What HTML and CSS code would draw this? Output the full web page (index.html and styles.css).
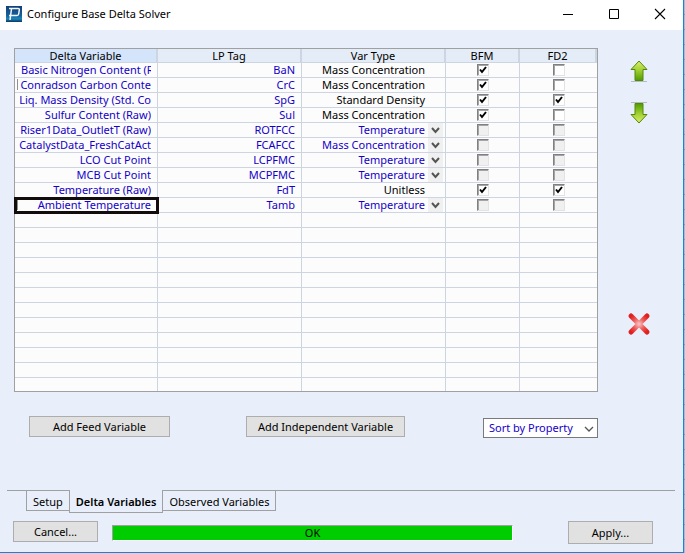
FILE: index.html
```html
<!DOCTYPE html>
<html lang="en">
<head>
<meta charset="utf-8">
<title>Configure Base Delta Solver</title>
<link rel="stylesheet" href="styles.css">
</head>
<body>
<div class="dialog">
  <header class="titlebar">
    <svg class="logo" width="16" height="16" viewBox="0 0 16 16" aria-hidden="true">
      <defs><linearGradient id="navy" x1="0" y1="0" x2="0" y2="1"><stop offset="0" stop-color="#123f78"/><stop offset=".6" stop-color="#16619b"/><stop offset=".8" stop-color="#1b86b8"/><stop offset="1" stop-color="#0c3566"/></linearGradient></defs>
      <rect width="16" height="16" fill="url(#navy)"/>
      <path d="M3 2.500h9q1.500 0 1.300 1.300L12.700 8q-.2 1.500-1.700 1.500H3M5.500 3L4 14" fill="none" stroke="#f2f6fa" stroke-width="1.500"/>
    </svg>
    <h1 class="title">Configure Base Delta Solver</h1>
    <button class="win" aria-label="Minimize"><svg width="12" height="12" viewBox="0 0 12 12"><path d="M1 6.500h10" stroke="#000"/></svg></button>
    <button class="win" aria-label="Maximize"><svg width="12" height="12" viewBox="0 0 12 12"><path d="M1.500 1.500h9v9h-9z" fill="none" stroke="#000"/></svg></button>
    <button class="win" aria-label="Close"><svg width="12" height="12" viewBox="0 0 12 12"><path d="M1 1l10 10M11 1L1 11" stroke="#000" stroke-width="1.100"/></svg></button>
  </header>
  <main class="content">
    <section class="workspace">
      <table class="grid">
        <colgroup><col class="c-name"><col class="c-tag"><col class="c-type"><col class="c-bfm"><col class="c-fd2"></colgroup>
        <thead><tr><th class="current">Delta Variable</th><th>LP Tag</th><th>Var Type</th><th>BFM</th><th>FD2</th></tr></thead>
        <tbody id="rows"></tbody>
      </table>
      <div class="tools">
        <button class="tool" aria-label="Move up"><svg width="20" height="24" viewBox="0 0 20 24"><use href="#arrow"/></svg></button>
        <button class="tool" aria-label="Move down"><svg width="20" height="24" viewBox="0 0 20 24"><use href="#arrow-down"/></svg></button>
        <button class="tool remove" aria-label="Delete"><svg width="24" height="24" viewBox="0 0 24 24">
          <defs><radialGradient id="red" gradientUnits="userSpaceOnUse" cx="12" cy="12" r="11"><stop offset="0" stop-color="#f8c8c8"/><stop offset=".55" stop-color="#ee5555"/><stop offset="1" stop-color="#e21f1f"/></radialGradient></defs>
          <path d="M4 4l16 16M20 4L4 20" stroke="url(#red)" stroke-width="5" stroke-linecap="round"/></svg></button>
      </div>
    </section>
    <div class="actions">
      <button class="btn add-feed">Add Feed Variable</button>
      <button class="btn add-ind">Add Independent Variable</button>
      <span class="sort">
        <select class="sort-select" aria-label="Sort order"><option>Sort by Property</option></select>
        <svg class="sort-arrow" width="10" height="6" viewBox="0 0 10 6"><path d="M1 1l4 4 4-4" fill="none" stroke="#555" stroke-width="1.300"/></svg>
      </span>
    </div>
    <nav class="tabs">
      <button class="tab">Setup</button>
      <button class="tab active">Delta Variables</button>
      <button class="tab">Observed Variables</button>
    </nav>
    <footer class="footer">
      <button class="btn cancel">Cancel...</button>
      <div class="status" role="status">OK</div>
      <button class="btn apply">Apply...</button>
    </footer>
  </main>
</div>
<div class="backdrop"></div>
<svg class="defs" width="0" height="0" aria-hidden="true">
  <defs>
    <linearGradient id="green" x1="0" y1="0" x2="0" y2="1"><stop offset="0" stop-color="#d9ef6e"/><stop offset=".45" stop-color="#a5d233"/><stop offset="1" stop-color="#4f9c00"/></linearGradient>
    <linearGradient id="green-down" x1="0" y1="1" x2="0" y2="0"><stop offset="0" stop-color="#d9ef6e"/><stop offset=".45" stop-color="#a5d233"/><stop offset="1" stop-color="#4f9c00"/></linearGradient>
    <g id="arrow"><path d="M2 22.500h16" stroke="#b3bac4"/><path d="M10 2L2 10.500h4v11h8v-11h4z" fill="url(#green)" stroke="#52870c"/></g>
    <g id="arrow-down"><path d="M2 1.500h16" stroke="#b3bac4"/><path d="M10 22L2 13.500h4v-11h8v11h4z" fill="url(#green-down)" stroke="#52870c"/></g>
  </defs>
</svg>
<script src="grid.js"></script>
</body>
</html>
```
FILE: styles.css
```css
* { box-sizing: border-box; }
body {
  margin: 0;
  min-height: 100vh;
  display: flex;
  overflow: hidden;
  background: #fff;
  color: #000;
  font: 11px/14px "Noto Sans", "Open Sans", sans-serif;
}
button, select, input { font: inherit; color: inherit; margin: 0; }
button { padding: 0; border: 0; background: none; }
svg { display: block; }
.defs { position: absolute; }
.dialog {
  flex: 1;
  display: flex;
  flex-direction: column;
  border-right: 1px solid #1883d7;
  border-bottom: 1px solid #1883d7;
}
.backdrop {
  width: 1px;
  background: repeating-linear-gradient(#a3bdd8 0 14px, #7f9cba 14px 15px);
}
.titlebar { display: flex; align-items: center; height: 30px; padding: 0 0 2px 6px; background: #fff; }
.title { flex: 1; margin: 0 0 0 5px; font-size: 11px; line-height: 16px; font-weight: 400; }
.win { width: 46px; height: 28px; display: grid; place-items: center; }
.content { flex: 1; display: flex; flex-direction: column; padding: 18px 7px 8px; background: #e8effa; }
.workspace { display: flex; padding-left: 7px; }
.grid {
  flex: 1;
  table-layout: fixed;
  width: 100%;
  border-collapse: separate;
  border-spacing: 0;
  border: 1px solid #a0a0a0;
  background: #fcfcfc;
}
.c-name { width: 143px; }
.c-tag, .c-type { width: 144px; }
.c-bfm { width: 74px; }
.grid th, .grid td { padding: 0 6px; height: 15px; border: 0 solid #cdd4e2; border-width: 0 1px 1px 0; text-align: right; line-height: 14px; white-space: nowrap; overflow: hidden; }
.grid th { height: 14px; padding: 0; line-height: 13px; text-align: center; font-weight: 400; background: #e4ecf7; border-right-width: 2px; overflow: visible; }
.grid th.current { background: #d3e4fb; }
.grid td:last-child { border-right: 0; }
.grid tbody tr:last-child td { height: 13px; border-bottom: 0; }
.grid .name, .grid .tag, .grid .free { color: #1400c8; }
.grid td.name { padding-left: 3px; }
.clip { display: block; overflow: hidden; }
.clip.long { margin-left: 3px; text-align: left; }
.grid td.marked { background: linear-gradient(#909090, #909090) 2px 1px / 1px 11px no-repeat; }
.grid td.type { padding: 0 2px 0 0; }
.type-cell { display: flex; align-items: center; justify-content: flex-end; gap: 3px; padding-right: 18px; }
.type-cell.pick { padding-right: 0; }
.drop { width: 15px; height: 14px; display: grid; place-items: center; background: #f0f0f0; }
.grid td.flag { padding: 0; }
.grid td.selected { outline: 3px solid #120c0c; outline-offset: -2px; overflow: visible; }
.check {
  appearance: none;
  display: block;
  width: 12px;
  height: 12px;
  margin: 0 auto;
  border: 1px solid;
  border-color: #808080 #e3e3e3 #e3e3e3 #808080;
  box-shadow: inset 1px 1px #a5a5a5;
  background: #fff;
}
.check:disabled { background: #f0f0f0; }
.flag-cell { display: grid; place-items: center; position: relative; height: 14px; }
.tick { position: absolute; pointer-events: none; }
.tools { flex: 0 0 78px; display: flex; flex-direction: column; align-items: center; padding: 11px 0 0 4px; gap: 18px; }
.remove { margin-top: 169px; }
.actions { display: flex; align-items: flex-start; padding: 24px 78px 0 22px; }
.btn { height: 21px; border: 1px solid #adadad; background: #e1e1e1; }
.add-feed { width: 141px; }
.add-ind { width: 159px; margin-left: 76px; }
.sort { position: relative; width: 115px; margin: 2px 0 0 auto; }
.sort-select { appearance: none; display: block; width: 100%; height: 20px; padding: 0 5px; border: 1px solid #7a7a7a; border-radius: 0; background: #fff; color: #1400c8; }
.sort-arrow { position: absolute; right: 4px; top: 8px; pointer-events: none; }
.tabs { display: flex; align-items: flex-start; height: 23px; margin: auto 1px 0 0; padding-left: 19px; border-top: 1px solid #a0a0a0; }
.tab { height: 20px; padding: 2px 6px 0; border: 1px solid #a0a0a0; border-top: 0; }
.tab.active { height: 23px; margin: -1px -1px 0; background: #e8effa; font-weight: 600; }
.footer { display: flex; align-items: flex-start; margin-top: 8px; padding: 0 23px 0 6px; }
.cancel, .apply { width: 85px; }
.apply { height: 23px; }
.status { flex: 1; height: 16px; margin: 4px 55px 0 14px; border: 1px solid; border-color: #a0a0a0 #fff #fff #a0a0a0; background: #00cd00; text-align: center; }
```
FILE: grid.js
```js
const variables = [
  ["Basic Nitrogen Content (Raw)", "BaN", "Mass Concentration", 1, 0],
  ["Conradson Carbon Conte", "CrC", "Mass Concentration", 1, 0],
  ["Liq. Mass Density (Std. Co", "SpG", "Standard Density", 1, 1],
  ["Sulfur Content (Raw)", "Sul", "Mass Concentration", 1, 0],
  ["Riser1Data_OutletT (Raw)", "ROTFCC", "Temperature"],
  ["CatalystData_FreshCatAct", "FCAFCC", "Mass Concentration"],
  ["LCO Cut Point", "LCPFMC", "Temperature"],
  ["MCB Cut Point", "MCPFMC", "Temperature"],
  ["Temperature (Raw)", "FdT", "Unitless", 1, 1],
  ["Ambient Temperature", "Tamb", "Temperature"]
];
const totalRows = 22;
const nameClasses = { 1: " marked", 9: " marked selected" };
const arrow = '<svg width="9" height="7" viewBox="0 0 9 7"><path d="M1 1l3.500 4L8 1" fill="none" stroke="#555" stroke-width="2"/></svg>';
const tick = '<svg class="tick" width="8" height="8" viewBox="0 0 8 8"><path d="M1 3.500l2 2.500 4-5" fill="none" stroke="#000" stroke-width="2"/></svg>';

function flag(value, label) {
  const state = value === undefined ? "disabled" : value ? "checked" : "";
  return `<td class="flag"><div class="flag-cell"><input class="check" type="checkbox" aria-label="${label}" ${state}>${value ? tick : ""}</div></td>`;
}

let html = "";
for (let i = 0; i < totalRows; i++) {
  const v = variables[i];
  if (!v) { html += "<tr><td></td><td></td><td></td><td></td><td></td></tr>"; continue; }
  const [name, tag, type, bfm, fd2] = v;
  const free = bfm === undefined;
  html += `<tr><td class="name${nameClasses[i] || ""}"><span class="clip${i === 0 ? " long" : ""}">${name}</span></td>` +
    `<td class="tag">${tag}</td>` +
    `<td class="type${free ? " free" : ""}"><div class="type-cell${free ? " pick" : ""}">${type}${free ? `<button class="drop" aria-label="Choose type">${arrow}</button>` : ""}</div></td>` +
    flag(bfm, name + " BFM") + flag(fd2, name + " FD2") + "</tr>";
}
document.getElementById("rows").innerHTML = html;
```
